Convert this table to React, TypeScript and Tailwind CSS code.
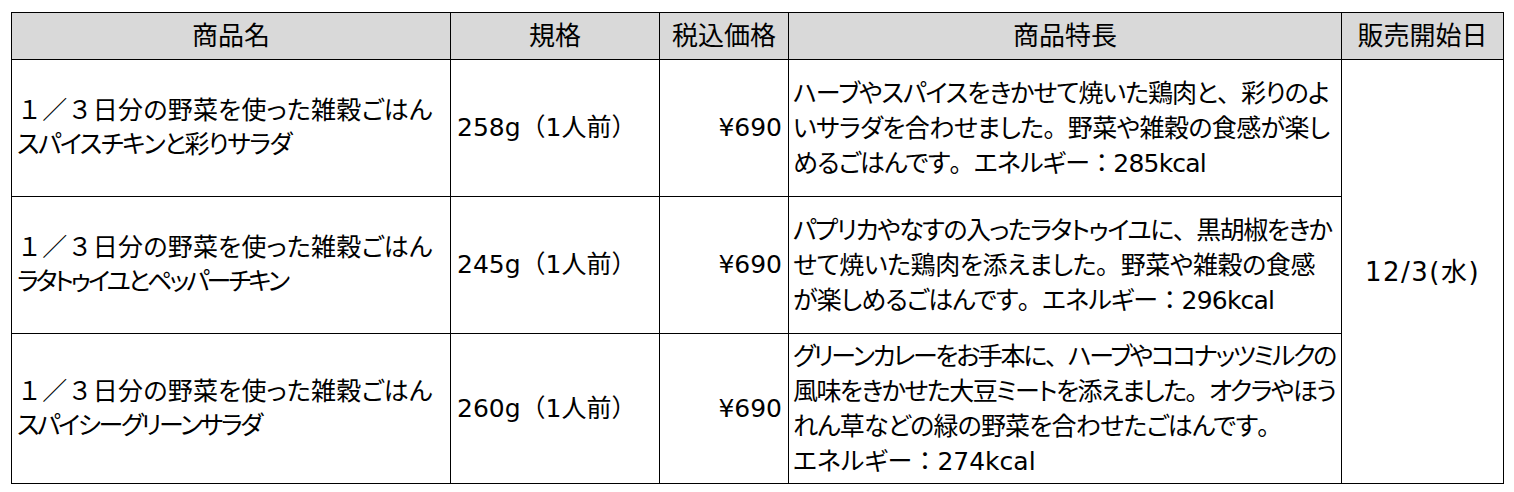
const FULL = /([（）／：、。１３])/;

function J({ t }: { t: string }) {
  return (
    <>
      {t.split(FULL).map((s, i) =>
        i % 2 === 1 ? (
          <span key={i} className="[font-feature-settings:normal]">
            {s}
          </span>
        ) : (
          s
        )
      )}
    </>
  );
}

type Line = [string, string];

const rows: { name: Line[]; spec: string; price: string; desc: Line[]; h: string }[] = [
  {
    name: [
      ['１／３日分の野菜を使った雑穀ごはん', 'tracking-[0.25px]'],
      ['スパイスチキンと彩りサラダ', 'tracking-[-1.5px]'],
    ],
    spec: '258g（1人前）',
    price: '¥690',
    desc: [
      ['ハーブやスパイスをきかせて焼いた鶏肉と、彩りのよ', 'tracking-[-1px]'],
      ['いサラダを合わせました。野菜や雑穀の食感が楽し', 'tracking-[-0.6px]'],
      ['めるごはんです。エネルギー：285kcal', 'tracking-[-0.8px]'],
    ],
    h: 'h-[137px]',
  },
  {
    name: [
      ['１／３日分の野菜を使った雑穀ごはん', 'tracking-[0.25px]'],
      ['ラタトゥイユとペッパーチキン', 'tracking-[-3px]'],
    ],
    spec: '245g（1人前）',
    price: '¥690',
    desc: [
      ['パプリカやなすの入ったラタトゥイユに、黒胡椒をきか', 'tracking-[-1.5px]'],
      ['せて焼いた鶏肉を添えました。野菜や雑穀の食感', 'tracking-[-0.4px]'],
      ['が楽しめるごはんです。エネルギー：296kcal', 'tracking-[-0.8px]'],
    ],
    h: 'h-[137px]',
  },
  {
    name: [
      ['１／３日分の野菜を使った雑穀ごはん', 'tracking-[0.25px]'],
      ['スパイシーグリーンサラダ', 'tracking-[-2.4px]'],
    ],
    spec: '260g（1人前）',
    price: '¥690',
    desc: [
      ['グリーンカレーをお手本に、ハーブやココナッツミルクの', 'tracking-[-2.3px]'],
      ['風味をきかせた大豆ミートを添えました。オクラやほう', 'tracking-[-1.55px]'],
      ['れん草などの緑の野菜を合わせたごはんです。', 'tracking-[-0.8px]'],
      ['エネルギー：274kcal', 'tracking-[0px]'],
    ],
    h: 'h-[150px]',
  },
];

const cell = 'border border-black align-middle';
const head = 'border border-black align-middle font-normal text-center text-[26px]';

export default function App() {
  return (
    <div className="min-h-screen bg-white pt-[12px] pl-[11px] text-[25px] leading-[34px] text-black font-['DejaVu_Sans','Noto_Sans_CJK_JP',sans-serif] [font-feature-settings:'palt']">
      <table className="table-fixed border-collapse w-[1492px]">
        <colgroup>
          <col className="w-[439px]" />
          <col className="w-[209px]" />
          <col className="w-[129px]" />
          <col className="w-[553px]" />
          <col className="w-[162px]" />
        </colgroup>
        <thead>
          <tr className="h-[47px] bg-[#d9d9d9]">
            <th className={head}>商品名</th>
            <th className={head}>規格</th>
            <th className={head}>税込価格</th>
            <th className={head}>商品特長</th>
            <th className={head}>販売開始日</th>
          </tr>
        </thead>
        <tbody>
          {rows.map((r, i) => (
            <tr key={i} className={r.h}>
              <td className={`${cell} px-[5px] whitespace-nowrap`}>
                {r.name.map(([t, tr], j) => (
                  <div key={j} className={tr}>
                    <J t={t} />
                  </div>
                ))}
              </td>
              <td className={`${cell} px-[6px] whitespace-nowrap`}>
                <J t={r.spec} />
              </td>
              <td className={`${cell} px-[6px] text-right whitespace-nowrap`}>{r.price}</td>
              <td className={`${cell} px-[4px] whitespace-nowrap leading-[35px]`}>
                {r.desc.map(([t, tr], j) => (
                  <div key={j} className={tr}>
                    <J t={t} />
                  </div>
                ))}
              </td>
              {i === 0 && (
                <td rowSpan={3} className={`${cell} text-center text-[26px] tracking-[1.5px]`}>
                  12/3(水)
                </td>
              )}
            </tr>
          ))}
        </tbody>
      </table>
    </div>
  );
}
